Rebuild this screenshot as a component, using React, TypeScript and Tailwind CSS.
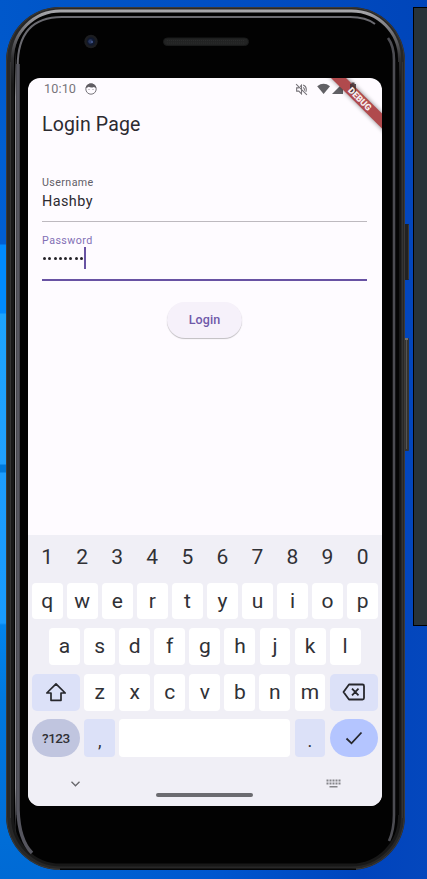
import React from "react";

const digits = "1234567890".split("");
const row1 = "qwertyuiop".split("");
const row2 = "asdfghjkl".split("");
const row3 = "zxcvbnm".split("");

function Key({ label, low = false }: { label: string; low?: boolean }) {
  return (
    <div
      className={
        low
          ? "flex h-full w-[30.9px] items-center justify-center rounded-[4px] bg-[#dce1f8] pt-[5px] text-[18px]"
          : "flex h-full w-[30.9px] items-center justify-center rounded-[4px] bg-white"
      }
    >
      {label}
    </div>
  );
}

function PhoneBody() {
  return (
    <svg className="absolute inset-0" width="427" height="879" viewBox="0 0 427 879" fill="none">
      <defs>
        <linearGradient id="rim" x1="0" y1="7" x2="0" y2="870" gradientUnits="userSpaceOnUse">
          <stop offset="0" stopColor="#b0b0b4" />
          <stop offset="0.02" stopColor="#85858a" />
          <stop offset="0.06" stopColor="#303032" />
          <stop offset="0.09" stopColor="#181818" />
          <stop offset="1" stopColor="#181818" />
        </linearGradient>
        <linearGradient id="shineL" x1="0" y1="50" x2="0" y2="855" gradientUnits="userSpaceOnUse">
          <stop offset="0" stopColor="#6a6a70" />
          <stop offset="0.96" stopColor="#62626a" />
          <stop offset="1" stopColor="#222222" />
        </linearGradient>
        <linearGradient id="edgeL" x1="0" y1="50" x2="0" y2="835" gradientUnits="userSpaceOnUse">
          <stop offset="0" stopColor="#8c8c90" stopOpacity="0" />
          <stop offset="0.06" stopColor="#8c8c90" />
          <stop offset="0.94" stopColor="#8c8c90" />
          <stop offset="1" stopColor="#8c8c90" stopOpacity="0" />
        </linearGradient>
      </defs>
      <rect x="404" y="224" width="5" height="56" rx="1" fill="#222222" />
      <path d="M408.5 225v54" stroke="#3c3833" />
      <rect x="404" y="338" width="5" height="113" rx="1" fill="#333333" />
      <path d="M406.5 340v109" stroke="#555555" />
      <path d="M405 339h3" stroke="#aaaaaa" />
      <rect x="6" y="7" width="399" height="863" rx="54" fill="#272727" />
      <rect x="6.5" y="7.5" width="398" height="862" rx="53.5" stroke="#3c3a38" />
      <path d="M10.5 62v756M402.500 62v756" stroke="#343434" />
      <rect x="14" y="12" width="385" height="853" rx="46" fill="#020202" />
      <rect x="12.5" y="11" width="387" height="854" rx="48" stroke="url(#rim)" strokeWidth="3" />
      <path d="M60 869.2h296" stroke="#050505" strokeWidth="1.500" />
      <path d="M17.700 815V66Q17.700 17 62 17H350Q366 17 375 24" stroke="url(#shineL)" strokeWidth="2" />
      <path d="M18 64V810Q19 840 32 853" stroke="#55555e" strokeWidth="3.500" />
      <rect x="15" y="50" width="1" height="785" fill="url(#edgeL)" />
      <path d="M388 38Q394 46 394 60V815Q394 830 389 841" stroke="#4c4c52" strokeWidth="2.600" />
      <path d="M397.500 62V815" stroke="#050505" strokeWidth="3" />
      <circle cx="91" cy="41.5" r="6.7" fill="#1c1d20" />
      <circle cx="91" cy="41.5" r="4.2" fill="#10182d" />
      <circle cx="90.5" cy="41.5" r="2.3" fill="#28375f" />
      <circle cx="92" cy="42" r="1" fill="#445a91" />
      <rect x="163.5" y="38" width="85" height="7.5" rx="3.7" fill="#222323" stroke="#191a1a" />
      <path d="M167 40.5h78M167 43h78" stroke="#2b2c2c" strokeDasharray="1 1" />
    </svg>
  );
}

function StatusBar() {
  return (
    <div className="flex h-[22px] items-center pl-4 text-[#77747a]">
      <span className="text-[12.700px] tracking-[0.100px]">10:10</span>
      <svg className="ml-[9px]" width="12" height="12" viewBox="0 0 12 12">
        <circle cx="6" cy="6" r="5.200" fill="none" stroke="#77747a" strokeWidth="1" />
        <path d="M.800 5C1 2 3.200.5 6 .5s5 1.500 5.200 4.500C10 4.600 9.500 4.300 8.900 3.900 7 4.800 5 4.500 3.600 3.800 3 4.500 2 5 .800 5z" fill="#605d63" />
        <circle cx="4" cy="6.600" r=".5" fill="#77747a" />
        <circle cx="8" cy="6.600" r=".5" fill="#77747a" />
      </svg>
      <svg className="ml-[197.500px]" width="13" height="13" viewBox="0 0 24 24" fill="none" stroke="#77747a" strokeWidth="2">
        <path d="M2 2l20 20M7 9H3v6h4l5 5V4L9.500 6.500M15 8q3 2 2.500 6M15 3.500q8 3 5 13" />
      </svg>
      <svg className="ml-[9px]" width="42" height="14" viewBox="0 0 42 14">
        <path d="M.200 4.200Q6.500-.7 13 4.200L6.600 12z" fill="#616065" />
        <path d="M15 12L26 1v11z" fill="#616065" />
      </svg>
    </div>
  );
}

function DebugBanner() {
  return (
    <svg className="absolute top-0 right-0" width="64" height="64" viewBox="0 0 64 64">
      <defs>
        <filter id="soft" x="-30%" y="-30%" width="160%" height="160%">
          <feGaussianBlur stdDeviation="2.500" />
        </filter>
      </defs>
      <path d="M10-4L70 56V42L24-4z" fill="#000" opacity=".55" filter="url(#soft)" />
      <path d="M13 0L64 50.500V35.500L28 0z" fill="#b04a4d" />
      <path d="M32 6h1.500V4.500h3V6H38v10h-6z" fill="#403033" opacity=".85" />
      <text
        x="42"
        y="24.200"
        transform="rotate(45 42 21)"
        textAnchor="middle"
        fill="#f8eeee"
        fontSize="9"
        fontWeight="900"
        fontFamily="Roboto, sans-serif"
      >
        DEBUG
      </text>
    </svg>
  );
}

function Keyboard() {
  return (
    <div className="flex h-[271px] flex-col bg-[#f0eff6] pr-[4px] pl-[3.700px] text-[21px] leading-none text-[#303136]">
      <div className="flex h-[43px] items-center justify-between pt-[2px]">
        {digits.map((d) => (
          <span key={d} className="w-[30.9px] text-center">{d}</span>
        ))}
      </div>
      <div className="mt-[5px] flex h-9 justify-between">
        {row1.map((k) => <Key key={k} label={k} />)}
      </div>
      <div className="mt-[9px] flex h-[37px] justify-between px-[17.400px]">
        {row2.map((k) => <Key key={k} label={k} />)}
      </div>
      <div className="mt-[8.500px] flex h-[37.500px] justify-between">
        <div className="flex w-[48.400px] items-center justify-center rounded-[5px] bg-[#dce1f8]">
          <svg width="22" height="20" viewBox="0 0 22 20" fill="none" stroke="#26272c" strokeWidth="1.700" strokeLinejoin="round">
            <path d="M11 1.800L1.800 11H6v7.300h10V11h4.200z" />
          </svg>
        </div>
        {row3.map((k) => <Key key={k} label={k} />)}
        <div className="flex w-[48.400px] items-center justify-center rounded-[5px] bg-[#dce1f8]">
          <svg width="24" height="18" viewBox="0 0 24 18" fill="none" stroke="#26272c" strokeWidth="1.800" strokeLinejoin="round">
            <path d="M7 1.500h13.500q1.500 0 1.500 1.500v12q0 1.500-1.500 1.500H7L1.500 9zM10 5.700l6.500 6.600M16.500 5.700L10 12.300" />
          </svg>
        </div>
      </div>
      <div className="mt-2 flex h-[38px] justify-between">
        <div className="flex w-[48.400px] items-center justify-center rounded-[19px] bg-[#c0c5df] pt-px text-[13.500px] font-medium tracking-[-0.500px]">?123</div>
        <Key label="," low />
        <div className="w-[171px] rounded-[4px] bg-white" />
        <Key label="." low />
        <div className="flex w-[48.400px] items-center justify-center rounded-[19px] bg-[#b4c5ff]">
          <svg width="18" height="14" viewBox="0 0 18 14" fill="none" stroke="#26272c" strokeWidth="1.800">
            <path d="M1.500 7.500l5 4.800L16.500 1.500" />
          </svg>
        </div>
      </div>
      <div className="flex h-[49px] items-start pl-[38.500px]">
        <svg className="mt-[23px]" width="11" height="8" viewBox="0 0 11 8" fill="none" stroke="#66666b" strokeWidth="1.300">
          <path d="M1.500 1.800l4 4 4-4" />
        </svg>
        <div className="mt-[36px] ml-[75px] h-[3.500px] w-[97px] rounded-full bg-[#6b6b70]" />
        <svg className="mt-[22px] ml-[73px]" width="15" height="9" viewBox="0 0 15 9" fill="none" stroke="#85858a" strokeWidth="2">
          <path d="M.5 1.500h14M.5 4.500h14" strokeDasharray="2 1" />
          <path d="M3.500 7.700h8" strokeWidth="1.500" />
        </svg>
      </div>
    </div>
  );
}

export default function App() {
  return (
    <div className="relative h-[879px] w-[427px] overflow-hidden bg-[linear-gradient(90deg,#006ad5_0%,#0056cf_50%,#0044bd_85%,#0447bd_100%)] font-[Roboto,sans-serif]">
      <div className="absolute top-0 left-0 h-full w-10 bg-[linear-gradient(180deg,#0057cb_0px,#005fd2_150px,#005ed3_244px,#008aff_245px,#008aff_313px,#1da4ff_314px,#20a0ff_464px,#0079dc_465px,#0079dc_472px,#1d9dff_473px,#189bff_623px,#0284ed_625px,#0078de_700px,#006ad5_879px)]" />
      <div className="absolute top-0 left-0 h-10 w-full bg-[linear-gradient(90deg,#0058cb,#0045ba)]" />
      <div className="absolute top-[7px] left-[413px] h-[619px] w-5 border border-black bg-[#283339]" />
      <PhoneBody />
      <div className="relative mt-[78px] ml-[28px] flex h-[728px] w-[354px] flex-col overflow-hidden rounded-[12px] bg-[#fefbff]">
        <StatusBar />
        <h1 className="mt-[13px] pl-[14px] text-[19.500px] leading-6 tracking-[0.150px] text-[#2c2a30]">Login Page</h1>
        <div className="mr-[15px] ml-[14px] mt-[39px] flex h-[46px] flex-col border-b border-[#bdb9bf]">
          <span className="text-[10.700px] leading-[13px] tracking-[0.400px] text-[#625e67]">Username</span>
          <span className="mt-[4px] text-[14.400px] leading-[18px] tracking-[0.450px] text-[#2c2a30]">Hashby</span>
        </div>
        <div className="mr-[15px] ml-[14px] mt-[12px] flex h-[47px] flex-col border-b-2 border-[#6852a3]">
          <span className="text-[10.700px] leading-[13px] tracking-[0.450px] text-[#8270b5]">Password</span>
          <div className="flex h-[22px] items-center">
            <div className="flex gap-[2.300px] pl-[1px]">
              {Array.from({ length: 8 }, (_, i) => (
                <span key={i} className="size-[3px] rounded-full bg-[#242228]" />
              ))}
            </div>
            <div className="ml-[1px] h-[22px] w-[2px] bg-[#6852a3]" />
          </div>
        </div>
        <button className="mt-[20.500px] ml-[139px] h-9 w-[75px] rounded-full bg-[#f6f1fa] pt-px text-[12.500px] font-medium tracking-[0.100px] text-[#6f59a9] shadow-[0_1px_1px_rgba(0,0,0,0.25)]">
          Login
        </button>
        <div className="mt-auto">
          <Keyboard />
        </div>
        <DebugBanner />
      </div>
    </div>
  );
}
